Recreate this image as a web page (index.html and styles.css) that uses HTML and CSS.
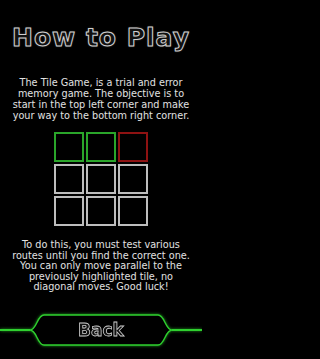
FILE: index.html
```html
<!DOCTYPE html>
<html>
<head>
<meta charset="utf-8">
<link rel="stylesheet" href="styles.css">
</head>
<body>
<div class="page">
  <h1 class="title">How to Play</h1>
  <p class="text intro">The Tile Game, is a trial and error<br>memory game. The objective is to<br>start in the top left corner and make<br>your way to the bottom right corner.</p>
  <div class="grid">
    <div class="tile green"></div>
    <div class="tile green"></div>
    <div class="tile red"></div>
    <div class="tile"></div>
    <div class="tile"></div>
    <div class="tile"></div>
    <div class="tile"></div>
    <div class="tile"></div>
    <div class="tile"></div>
  </div>
  <p class="text rules">To do this, you must test various<br>routes until you find the correct one.<br>You can only move parallel to the<br>previously highlighted tile, no<br>diagonal moves. Good luck!</p>
  <div class="back-row">
    <div class="wire"></div>
    <div class="back">
      <svg class="back-shape" width="142" height="32" viewBox="0 0 142 32">
        <path d="M0,16 C7,16 7,1 14,1 H128 C135,1 135,16 142,16 C135,16 135,31 128,31 H14 C7,31 7,16 0,16 Z" fill="#000" stroke="#2fcf2f" stroke-width="1.4"/>
      </svg>
      <span class="back-label">Back</span>
    </div>
    <div class="wire"></div>
  </div>
</div>
</body>
</html>
```

FILE: styles.css
```css
html, body {
  margin: 0;
  padding: 0;
  background: #000;
}
.page {
  width: 202px;
  height: 359px;
  display: flex;
  flex-direction: column;
  align-items: center;
  overflow: hidden;
}
.title {
  margin: 23px 0 0 0;
  font-family: "DejaVu Sans", sans-serif;
  font-weight: bold;
  font-size: 25px;
  line-height: 30px;
  letter-spacing: 1px;
  color: #111;
  -webkit-text-stroke: 1px #cfcfcf;
  text-shadow: 0 0 2px #777;
  white-space: nowrap;
}
.text {
  margin: 0;
  width: 202px;
  text-align: center;
  font-family: "DejaVu Sans", sans-serif;
  font-size: 9.7px;
  line-height: 11px;
  color: #e2e2e2;
  white-space: nowrap;
}
.intro {
  margin-top: 24px;
}
.grid {
  margin-top: 11px;
  display: grid;
  grid-template-columns: repeat(3, 30px);
  grid-auto-rows: 30px;
  gap: 2px;
}
.tile {
  box-sizing: border-box;
  border: 2px solid #bdbdbd;
}
.tile.green {
  border-color: #2aa52a;
}
.tile.red {
  border-color: #8e1212;
}
.rules {
  margin-top: 14px;
  line-height: 10.6px;
}
.back-row {
  margin-top: 21px;
  width: 202px;
  display: flex;
  align-items: center;
  filter: drop-shadow(0 0 1.5px #1f9f1f);
}
.wire {
  flex: 1;
  height: 1.4px;
  background: #2fcf2f;
}
.back {
  position: relative;
  width: 142px;
  height: 32px;
  display: flex;
  align-items: center;
  justify-content: center;
}
.back-shape {
  position: absolute;
  left: 0;
  top: 0;
}
.back-label {
  position: relative;
  font-family: "DejaVu Sans", sans-serif;
  font-weight: bold;
  font-size: 17px;
  line-height: 20px;
  color: #111;
  -webkit-text-stroke: 0.8px #cfcfcf;
}
```
